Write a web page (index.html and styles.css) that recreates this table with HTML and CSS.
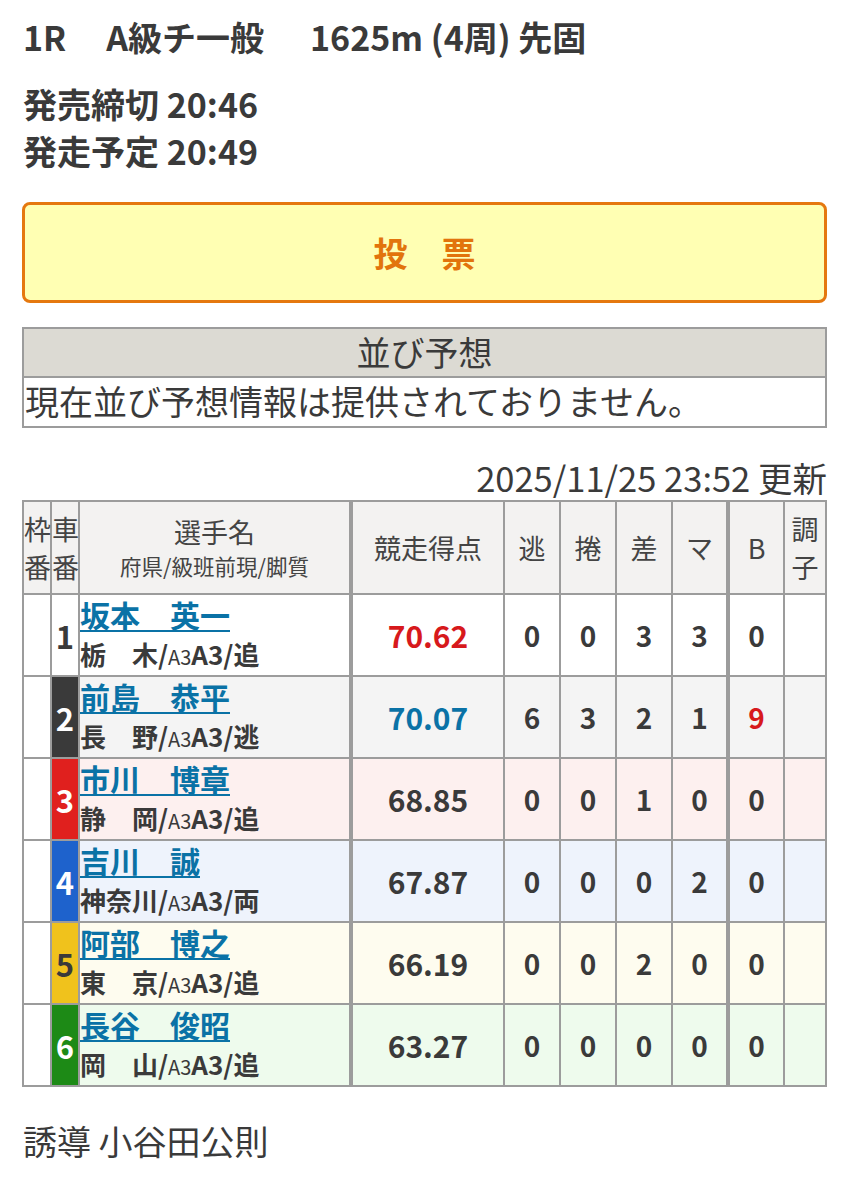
FILE: index.html
```html
<!DOCTYPE html>
<html lang="ja">
<head>
<meta charset="utf-8">
<link rel="stylesheet" href="styles.css">
</head>
<body>
<div class="page">
  <h1 class="race-title"><span class="gap1">1R</span><span class="gap2">A級チ一般</span><span>1625m (4周) 先固</span></h1>
  <div class="times">
    <div>発売締切 20:46</div>
    <div>発走予定 20:49</div>
  </div>
  <a class="vote-btn">投　票</a>

  <div class="narabi">
    <div class="narabi-head">並び予想</div>
    <div class="narabi-body">現在並び予想情報は提供されておりません。</div>
  </div>

  <div class="updated">2025/11/25 23:52 更新</div>

  <table class="entries">
    <colgroup>
      <col class="c-waku"><col class="c-sha"><col class="c-name"><col class="c-score">
      <col class="c-n"><col class="c-n"><col class="c-n"><col class="c-n"><col class="c-n"><col class="c-cho">
    </colgroup>
    <thead>
      <tr>
        <th class="narrow">枠<br>番</th>
        <th class="narrow">車<br>番</th>
        <th class="thick"><div class="h-main">選手名</div><div class="h-sub">府県/級班前現/脚質</div></th>
        <th>競走得点</th>
        <th>逃</th>
        <th>捲</th>
        <th>差</th>
        <th class="thick">マ</th>
        <th>B</th>
        <th class="narrow">調<br>子</th>
      </tr>
    </thead>
    <tbody>
      <tr class="r1">
        <td class="waku"></td><td class="sha s1">1</td>
        <td class="name thick"><a class="player">坂本　英一</a><div class="info">栃　木/<span class="sm">A3</span>A3/追</div></td>
        <td class="score red">70.62</td><td>0</td><td>0</td><td>3</td><td class="thick">3</td><td>0</td><td></td>
      </tr>
      <tr class="r2">
        <td class="waku"></td><td class="sha s2">2</td>
        <td class="name thick"><a class="player">前島　恭平</a><div class="info">長　野/<span class="sm">A3</span>A3/逃</div></td>
        <td class="score blue">70.07</td><td>6</td><td>3</td><td>2</td><td class="thick">1</td><td class="red">9</td><td></td>
      </tr>
      <tr class="r3">
        <td class="waku"></td><td class="sha s3">3</td>
        <td class="name thick"><a class="player">市川　博章</a><div class="info">静　岡/<span class="sm">A3</span>A3/追</div></td>
        <td class="score">68.85</td><td>0</td><td>0</td><td>1</td><td class="thick">0</td><td>0</td><td></td>
      </tr>
      <tr class="r4">
        <td class="waku"></td><td class="sha s4">4</td>
        <td class="name thick"><a class="player">吉川　誠</a><div class="info">神奈川/<span class="sm">A3</span>A3/両</div></td>
        <td class="score">67.87</td><td>0</td><td>0</td><td>0</td><td class="thick">2</td><td>0</td><td></td>
      </tr>
      <tr class="r5">
        <td class="waku"></td><td class="sha s5">5</td>
        <td class="name thick"><a class="player">阿部　博之</a><div class="info">東　京/<span class="sm">A3</span>A3/追</div></td>
        <td class="score">66.19</td><td>0</td><td>0</td><td>2</td><td class="thick">0</td><td>0</td><td></td>
      </tr>
      <tr class="r6">
        <td class="waku"></td><td class="sha s6">6</td>
        <td class="name thick"><a class="player">長谷　俊昭</a><div class="info">岡　山/<span class="sm">A3</span>A3/追</div></td>
        <td class="score">63.27</td><td>0</td><td>0</td><td>0</td><td class="thick">0</td><td>0</td><td></td>
      </tr>
    </tbody>
  </table>

  <div class="yudo">誘導 小谷田公則</div>
</div>
</body>
</html>
```

FILE: styles.css
```css
* { box-sizing: border-box; }
html, body { margin: 0; padding: 0; background: #fff; }
body {
  font-family: "Noto Sans CJK JP", "Noto Sans", sans-serif;
  color: #3a3a3a;
}
.page { padding: 13px 21px 40px 22px; }

.race-title {
  margin: 0;
  font-size: 34px;
  font-weight: 700;
  line-height: 48px;
  padding-left: 1px;
}
.race-title .gap1 { margin-right: 40px; }
.race-title .gap2 { margin-right: 46px; }

.times {
  margin-top: 19px;
  font-size: 34px;
  font-weight: 700;
  line-height: 47px;
  padding-left: 1px;
}

.vote-btn {
  display: flex;
  align-items: center;
  justify-content: center;
  margin-top: 28px;
  height: 101px;
  background: #ffffb3;
  border: 3px solid #e5780f;
  border-radius: 8px;
  color: #e2740c;
  font-size: 34px;
  font-weight: 700;
}

.narabi {
  margin-top: 24px;
  border: 2px solid #9c9c9c;
}
.narabi-head {
  background: #dcdad3;
  height: 49px;
  line-height: 46px;
  text-align: center;
  font-size: 34px;
  border-bottom: 2px solid #9c9c9c;
}
.narabi-body {
  height: 48px;
  line-height: 46px;
  font-size: 34px;
  padding-left: 1px;
}

.updated {
  margin-top: 26px;
  text-align: right;
  font-size: 34.5px;
  line-height: 46px;
}

.entries {
  width: 805px;
  border-collapse: collapse;
  table-layout: fixed;
}
.c-waku { width: 28px; }
.c-sha { width: 28px; }
.c-name { width: 272px; }
.c-score { width: 153px; }
.c-n { width: 56px; }
.c-cho { width: 42px; }

.entries th, .entries td {
  border: 2px solid #9c9c9c;
  padding: 0;
  text-align: center;
  vertical-align: middle;
}
.entries th.thick, .entries td.thick { border-right-width: 4px; }

.entries thead th {
  background: #f3f2f1;
  height: 93px;
  font-weight: 400;
  font-size: 27px;
  line-height: 36px;
  color: #444;
}
.entries thead th.narrow { line-height: 38px; }
.h-main { font-size: 27px; line-height: 36px; }
.h-sub { font-size: 21.5px; line-height: 32px; }

.entries tbody td {
  height: 82px;
  font-size: 28px;
  font-weight: 700;
}
.entries tbody td.waku { background: #fff; }
.entries tbody td.sha { font-size: 31px; color: #fff; }
.entries tbody td.s1 { background: #fff; color: #3a3a3a; }
.entries tbody td.s2 { background: #3a3a3a; }
.entries tbody td.s3 { background: #e0201e; }
.entries tbody td.s4 { background: #1e62cc; }
.entries tbody td.s5 { background: #f0c21c; color: #3a3a3a; }
.entries tbody td.s6 { background: #1d8a16; }

.r1 td { background: #fff; }
.r2 td { background: #f4f4f4; }
.r3 td { background: #fdf0ef; }
.r4 td { background: #eef3fc; }
.r5 td { background: #fefcef; }
.r6 td { background: #eefbed; }

.entries tbody td.name {
  text-align: left;
  padding-left: 0;
}
.player {
  display: inline-block;
  color: #0a72a6;
  text-decoration: underline;
  text-decoration-thickness: 2px;
  text-underline-offset: 3px;
  font-size: 30px;
  line-height: 37px;
}
.info {
  font-size: 26px;
  line-height: 37px;
}
.info .sm { font-size: 20px; font-weight: 400; }

.entries tbody td.score { font-size: 30px; }
.entries tbody td.red { color: #d7191c; }
.entries tbody td.blue { color: #0a72a6; }

.yudo {
  margin-top: 31px;
  font-size: 34px;
  line-height: 46px;
  padding-left: 1px;
}
```
